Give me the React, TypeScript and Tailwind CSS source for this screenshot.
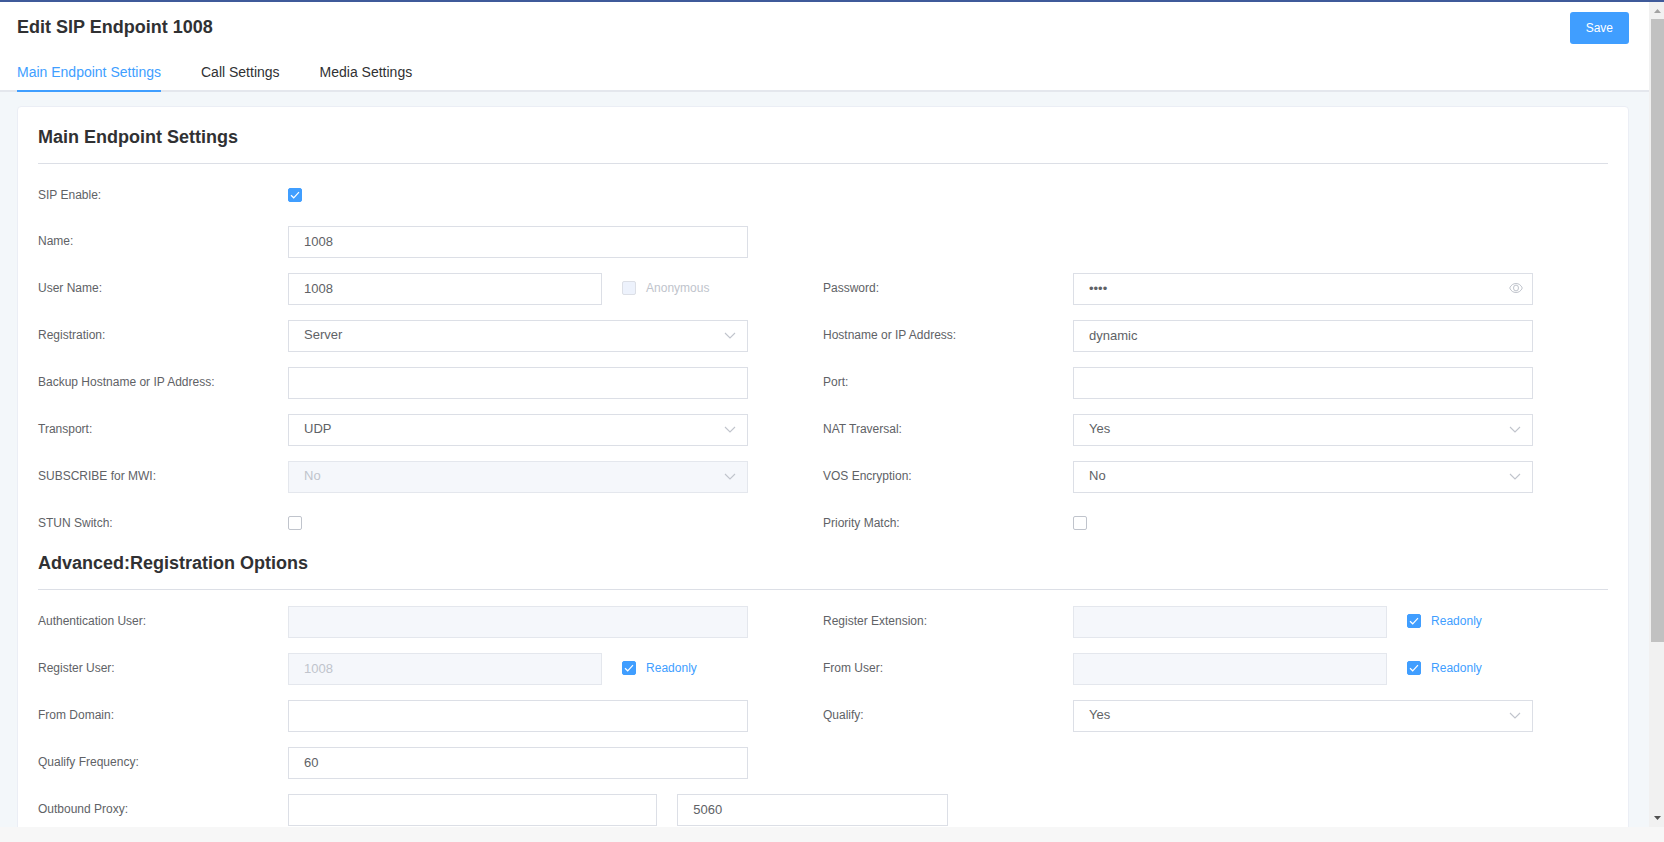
import { ReactNode, useState } from 'react';
import clsx from 'clsx';

const tabs = ['Main Endpoint Settings', 'Call Settings', 'Media Settings'];

const inputClass =
  'block h-8 w-full min-w-0 border px-[15px] pb-0.5 text-[13px] outline-none focus:border-[#409eff] border-[#dcdfe6] bg-white text-[#606266] disabled:border-[#e4e7ed] disabled:bg-[#f5f7fb] disabled:text-[#c0c4cc] disabled:opacity-100';

interface FieldProps {
  id: string;
  label: string;
  right?: boolean;
  children: ReactNode;
}

function Field({ id, label, right, children }: FieldProps) {
  return (
    <div className={clsx('flex', right ? 'col-start-2' : 'col-start-1')}>
      <label htmlFor={id} className="w-[250px] shrink-0 text-[12px] leading-[30px]">
        {label}
      </label>
      <div className="min-w-0 flex-1">
        <div className="flex w-[86%]">{children}</div>
      </div>
    </div>
  );
}

interface TextProps {
  id: string;
  value?: string;
  type?: string;
  disabled?: boolean;
  label?: string;
}

function TextInput({ id, value = '', type = 'text', disabled, label }: TextProps) {
  return (
    <input
      id={id}
      type={type}
      defaultValue={value}
      disabled={disabled}
      aria-label={label}
      autoComplete="off"
      className={inputClass}
    />
  );
}

interface SelectProps {
  id: string;
  value: string;
  options: string[];
  disabled?: boolean;
}

function Select({ id, value, options, disabled }: SelectProps) {
  return (
    <div className="relative w-full">
      <select id={id} defaultValue={value} disabled={disabled} className={clsx(inputClass, 'appearance-none pr-8')}>
        {options.map(option => (
          <option key={option}>{option}</option>
        ))}
      </select>
      <svg
        viewBox="0 0 12 12"
        className="pointer-events-none absolute top-2.5 right-3 h-3 w-3"
        fill="none"
        stroke="#c0c4cc"
        strokeWidth="1.1"
      >
        <path d="M1 3 6 8 11 3" />
      </svg>
    </div>
  );
}

interface CheckboxProps {
  id: string;
  checked?: boolean;
  disabled?: boolean;
}

function Checkbox({ id, checked = false, disabled }: CheckboxProps) {
  return (
    <span className="relative block h-3.5 w-3.5 shrink-0">
      <input
        id={id}
        type="checkbox"
        defaultChecked={checked}
        disabled={disabled}
        className="peer block h-3.5 w-3.5 appearance-none rounded-[2px] border border-[#c0c4cc] bg-white checked:border-[#409eff] checked:bg-[#409eff] disabled:border-[#dcdfe6] disabled:bg-[#edf2fc]"
      />
      <svg
        viewBox="0 0 14 14"
        className="pointer-events-none absolute inset-0 hidden h-3.5 w-3.5 peer-checked:block"
        fill="none"
        stroke="white"
        strokeWidth="1.2"
      >
        <path d="M3 7.2 5.7 9.8 11 4.2" />
      </svg>
    </span>
  );
}

// Checkbox alone in its row
function CheckField({ id, label, checked, right }: { id: string; label: string; checked?: boolean; right?: boolean }) {
  return (
    <Field id={id} label={label} right={right}>
      <div className="flex h-[31px] items-center pb-px">
        <Checkbox id={id} checked={checked} />
      </div>
    </Field>
  );
}

// Checkbox that follows a text input
function SideCheck({ id, text, checked, disabled }: CheckboxProps & { text: string }) {
  return (
    <label
      htmlFor={id}
      className={clsx(
        'ml-5 flex h-[30px] w-[126px] shrink-0 items-center gap-2.5 text-[12px]',
        disabled ? 'text-[#c0c4cc]' : 'text-[#606266] has-checked:text-[#409eff]'
      )}
    >
      <Checkbox id={id} checked={checked} disabled={disabled} />
      {text}
    </label>
  );
}

function Section({ title, children }: { title: string; children: ReactNode }) {
  return (
    <section className="mb-[15px]">
      <h2 className="mb-4 border-b border-[#dcdfe6] pb-[17px] text-[18px] leading-[18px] font-bold text-[#303133]">
        {title}
      </h2>
      <div className="grid grid-cols-2 gap-y-[15px]">{children}</div>
    </section>
  );
}

function Scrollbar() {
  return (
    <div className="flex w-[15px] shrink-0 flex-col bg-[#f1f1f1] pl-0.5" aria-hidden="true">
      <svg viewBox="0 0 13 17" className="h-[17px] w-[13px] shrink-0" fill="#a3a3a3">
        <path d="M3 11h7L6.500 7z" />
      </svg>
      <div className="flex min-h-0 flex-1 flex-col">
        <div className="flex-[37] bg-[#c1c1c1]" />
        <div className="flex-[10]" />
      </div>
      <svg viewBox="0 0 13 17" className="h-[17px] w-[13px] shrink-0" fill="#505050">
        <path d="M3 6h7L6.500 10z" />
      </svg>
    </div>
  );
}

export default function App() {
  const [activeTab, setActiveTab] = useState(tabs[0]);
  const [showPassword, setShowPassword] = useState(false);

  return (
    <div className="flex h-screen flex-col overflow-hidden border-t-2 border-[#3f5a9a] bg-[#f7f7f7] pb-[15px] font-['Liberation_Sans',Arial,sans-serif] text-[#606266]">
      <div className="flex min-h-0 flex-1">
        <div className="flex min-w-0 flex-1 flex-col bg-[#f3f7fa]">
          <header className="shrink-0 bg-white">
            <div className="flex h-[50px] items-start justify-between pr-5 pl-[17px]">
              <h1 className="pt-[15px] text-[18px] leading-5 font-bold text-[#303133]">Edit SIP Endpoint 1008</h1>
              <button
                type="button"
                className="mt-2.5 h-8 rounded-[3px] bg-[#409eff] px-4 text-[12px] font-medium text-white hover:bg-[#66b1ff]"
              >
                Save
              </button>
            </div>
            <nav className="flex gap-10 pl-[17px] shadow-[inset_0_-2px_0_#e4e7ed]">
              {tabs.map(tab => (
                <button
                  key={tab}
                  type="button"
                  onClick={() => setActiveTab(tab)}
                  className={clsx(
                    'h-10 border-b-2 text-[14px] leading-10',
                    tab === activeTab ? 'border-[#409eff] text-[#409eff]' : 'border-transparent text-[#303133]'
                  )}
                >
                  {tab}
                </button>
              ))}
            </nav>
          </header>

          <main className="min-h-0 flex-1 overflow-hidden pt-3.5 pr-5 pl-[17px]">
            <form className="rounded-[4px] border border-[#ebeef5] bg-white px-5 pt-[21px]">
              <Section title="Main Endpoint Settings">
                <CheckField id="sip-enable" label="SIP Enable:" checked />
                <Field id="name" label="Name:">
                  <TextInput id="name" value="1008" />
                </Field>
                <Field id="user-name" label="User Name:">
                  <TextInput id="user-name" value="1008" />
                  <SideCheck id="anonymous" text="Anonymous" disabled />
                </Field>
                <Field id="password" label="Password:" right>
                  <div className="relative w-full">
                    <TextInput id="password" type={showPassword ? 'text' : 'password'} value="1008" />
                    <button
                      type="button"
                      aria-label="Show password"
                      onClick={() => setShowPassword(!showPassword)}
                      className="absolute top-2 right-2.5"
                    >
                      <svg viewBox="0 0 14 14" className="h-3.5 w-3.5" fill="none" stroke="#c0c4cc">
                        <path d="M.7 7C2 4 4.200 2.500 7 2.500S12 4 13.300 7C12 10 9.800 11.500 7 11.500S2 10 .7 7z" />
                        <ellipse cx="7" cy="7" rx="2.500" ry="2.900" />
                      </svg>
                    </button>
                  </div>
                </Field>
                <Field id="registration" label="Registration:">
                  <Select id="registration" value="Server" options={['None', 'Server', 'Client']} />
                </Field>
                <Field id="hostname" label="Hostname or IP Address:" right>
                  <TextInput id="hostname" value="dynamic" />
                </Field>
                <Field id="backup-hostname" label="Backup Hostname or IP Address:">
                  <TextInput id="backup-hostname" />
                </Field>
                <Field id="port" label="Port:" right>
                  <TextInput id="port" />
                </Field>
                <Field id="transport" label="Transport:">
                  <Select id="transport" value="UDP" options={['UDP', 'TCP', 'TLS']} />
                </Field>
                <Field id="nat" label="NAT Traversal:" right>
                  <Select id="nat" value="Yes" options={['Yes', 'No']} />
                </Field>
                <Field id="mwi" label="SUBSCRIBE for MWI:">
                  <Select id="mwi" value="No" options={['Yes', 'No']} disabled />
                </Field>
                <Field id="vos" label="VOS Encryption:" right>
                  <Select id="vos" value="No" options={['Yes', 'No']} />
                </Field>
                <CheckField id="stun" label="STUN Switch:" />
                <CheckField id="priority" label="Priority Match:" right />
              </Section>

              <Section title="Advanced:Registration Options">
                <Field id="auth-user" label="Authentication User:">
                  <TextInput id="auth-user" disabled />
                </Field>
                <Field id="register-extension" label="Register Extension:" right>
                  <TextInput id="register-extension" disabled />
                  <SideCheck id="register-extension-readonly" text="Readonly" checked />
                </Field>
                <Field id="register-user" label="Register User:">
                  <TextInput id="register-user" value="1008" disabled />
                  <SideCheck id="register-user-readonly" text="Readonly" checked />
                </Field>
                <Field id="from-user" label="From User:" right>
                  <TextInput id="from-user" disabled />
                  <SideCheck id="from-user-readonly" text="Readonly" checked />
                </Field>
                <Field id="from-domain" label="From Domain:">
                  <TextInput id="from-domain" />
                </Field>
                <Field id="qualify" label="Qualify:" right>
                  <Select id="qualify" value="Yes" options={['Yes', 'No']} />
                </Field>
                <Field id="qualify-frequency" label="Qualify Frequency:">
                  <TextInput id="qualify-frequency" value="60" />
                </Field>
                <div className="col-span-2 flex">
                  <label htmlFor="outbound-proxy" className="w-[250px] shrink-0 text-[12px] leading-[30px]">
                    Outbound Proxy:
                  </label>
                  <div className="min-w-0 flex-1">
                    <div className="flex w-1/2 gap-5">
                      <div className="flex-[15]">
                        <TextInput id="outbound-proxy" />
                      </div>
                      <div className="flex-[11]">
                        <TextInput id="outbound-proxy-port" value="5060" label="Outbound Proxy Port" />
                      </div>
                    </div>
                  </div>
                </div>
              </Section>
            </form>
          </main>
        </div>
        <Scrollbar />
      </div>
    </div>
  );
}
